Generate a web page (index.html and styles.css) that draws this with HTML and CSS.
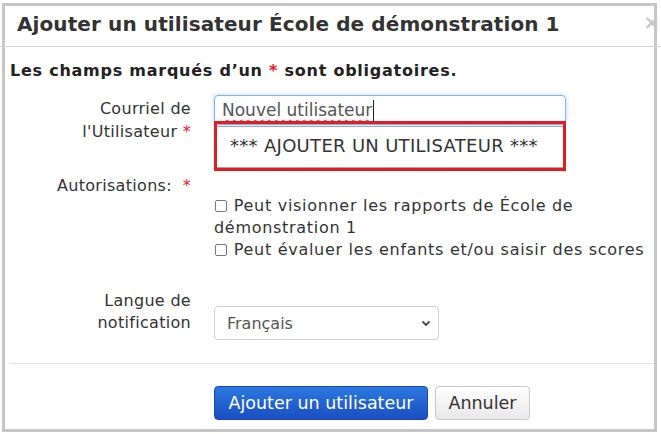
FILE: index.html
```html
<!DOCTYPE html>
<html lang="fr">
<head>
<meta charset="utf-8">
<title>Ajouter un utilisateur</title>
<link rel="stylesheet" href="styles.css">
</head>
<body>
<div class="modal">
  <div class="modal-header">
    <h1 class="modal-title">Ajouter un utilisateur École de démonstration 1</h1>
    <span class="close">×</span>
  </div>
  <div class="modal-body">
    <p class="required-note">Les champs marqués d’un <span class="req">*</span> sont obligatoires.</p>
    <div class="form-row row-email">
      <label class="form-label">Courriel de<br>l'Utilisateur <span class="req">*</span></label>
      <div class="form-control-wrap">
        <div class="text-input"><span class="typed">Nouvel utilisateur</span><span class="caret"></span></div>
        <div class="suggest">
          <div class="suggest-item">*** AJOUTER UN UTILISATEUR ***</div>
        </div>
        <div class="highlight"></div>
      </div>
    </div>
    <div class="form-row row-perms">
      <label class="form-label">Autorisations:&nbsp; <span class="req">*</span></label>
      <div class="form-control-wrap checks">
        <div class="check"><span class="box"></span> Peut visionner les rapports de École de démonstration 1</div>
        <div class="check"><span class="box"></span> Peut évaluer les enfants et/ou saisir des scores</div>
      </div>
    </div>
    <div class="form-row row-lang">
      <label class="form-label">Langue de<br>notification</label>
      <div class="form-control-wrap lang">
        <div class="select">
          <span>Français</span>
          <svg class="chev" width="10" height="7" viewBox="0 0 10 7"><path d="M1.5 1.5 L5 5 L8.5 1.5" fill="none" stroke="#444" stroke-width="1.8"/></svg>
        </div>
      </div>
    </div>
  </div>
  <div class="modal-footer">
    <button class="btn btn-primary">Ajouter un utilisateur</button>
    <button class="btn btn-default">Annuler</button>
  </div>
</div>
</body>
</html>
```
FILE: styles.css
```css
html, body {
  margin: 0;
  padding: 0;
  background: #fff;
}
body {
  font-family: "DejaVu Sans", Verdana, sans-serif;
  color: #333;
  font-size: 16px;
}
.modal {
  box-sizing: border-box;
  width: 655px;
  height: 429px;
  margin: 3px 0 0 2px;
  border: 3px solid #c6c6c6;
  position: relative;
  display: flex;
  flex-direction: column;
}
.modal-header {
  height: 40px;
  border-bottom: 1px solid #d4d4d4;
  margin: 0 -8px 0 -5px;
  padding-left: 17px;
  position: relative;
}
.modal-title {
  margin: 0;
  font-size: 20px;
  font-weight: bold;
  line-height: 30px;
  padding-top: 3px;
  color: #333;
  letter-spacing: 0.1px;
}
.close {
  position: absolute;
  right: 2px;
  top: 6px;
  font-size: 20px;
  font-weight: bold;
  color: #c8c8c8;
  line-height: 20px;
}
.modal-body {
  padding: 14px 0 23px 5px;
  flex: none;
}
.required-note {
  margin: 0;
  font-size: 16px;
  font-weight: bold;
  line-height: 20px;
  color: #222;
  letter-spacing: 0.75px;
}
.req {
  color: #e0201c;
}
.form-row {
  display: grid;
  grid-template-columns: 181px 1fr;
  column-gap: 23px;
}
.form-label {
  text-align: right;
  line-height: 23px;
  font-size: 16px;
  letter-spacing: 0.3px;
}
.row-email {
  margin-top: 14px;
}
.row-email .form-label {
  padding-top: 2px;
}
.form-control-wrap {
  position: relative;
}
.text-input {
  box-sizing: border-box;
  width: 352px;
  height: 30px;
  border: 1px solid #80b4f0;
  border-radius: 4px;
  box-shadow: 0 0 4px rgba(100, 160, 240, 0.45);
  padding: 4px 7px;
  font-size: 17px;
  line-height: 20px;
  color: #555;
  display: flex;
  align-items: center;
}
.typed {
  text-decoration: underline wavy #e0201c 1px;
  text-underline-offset: 3px;
}
.caret {
  display: inline-block;
  width: 1px;
  height: 21px;
  background: #222;
  margin-left: 1px;
}
.suggest {
  position: absolute;
  left: 0;
  top: 31px;
  box-sizing: border-box;
  width: 352px;
  height: 42px;
  background: #fff;
  border-top: 1px solid #a8a8a8;
  border-bottom: 1px solid #a8a8a8;
  border-left: 1px solid #bbb;
}
.suggest-item {
  padding: 0 0 0 15px;
  line-height: 38px;
  font-size: 18px;
  letter-spacing: 0.3px;
  color: #333;
}
.highlight {
  position: absolute;
  left: 0;
  top: 26px;
  box-sizing: border-box;
  width: 352px;
  height: 50px;
  border: 3px solid #e31b23;
}
.row-perms {
  margin-top: 32px;
}
.row-perms .form-label {
  line-height: 22px;
}
.checks {
  padding-top: 20px;
  line-height: 22px;
  font-size: 16px;
  letter-spacing: 0.7px;
  padding-right: 4px;
}
.check {
  line-height: 22px;
}
.box {
  display: inline-block;
  box-sizing: border-box;
  width: 12px;
  height: 12px;
  border: 1px solid #777;
  border-radius: 2px;
  vertical-align: -1px;
  margin-left: 1px;
  margin-right: 1px;
}
.row-lang {
  margin-top: 29px;
}
.row-lang .form-label {
  line-height: 22px;
}
.lang {
  padding-top: 16px;
}
.select {
  box-sizing: border-box;
  width: 225px;
  height: 34px;
  border: 1px solid #ccc;
  border-radius: 4px;
  display: flex;
  align-items: center;
  justify-content: space-between;
  padding: 0 7px 0 12px;
  font-size: 16px;
  color: #555;
}
.chev {
  display: block;
}
.modal-footer {
  border-top: 1px solid #e2e2e2;
  margin: 0 0 0 5px;
  padding: 22px 0 0 204px;
  display: flex;
  gap: 7px;
}
.btn {
  box-sizing: border-box;
  height: 34px;
  border-radius: 4px;
  font-family: "DejaVu Sans", Verdana, sans-serif;
  font-size: 17.5px;
  padding: 0;
  cursor: pointer;
}
.btn-primary {
  width: 214px;
  color: #fff;
  background: linear-gradient(#2c78e0, #1a4fc2);
  border: 1px solid #1a48b2;
}
.btn-default {
  width: 95px;
  color: #333;
  background: linear-gradient(#fff, #e8e8e8);
  border: 1px solid #c8c8c8;
}
```
